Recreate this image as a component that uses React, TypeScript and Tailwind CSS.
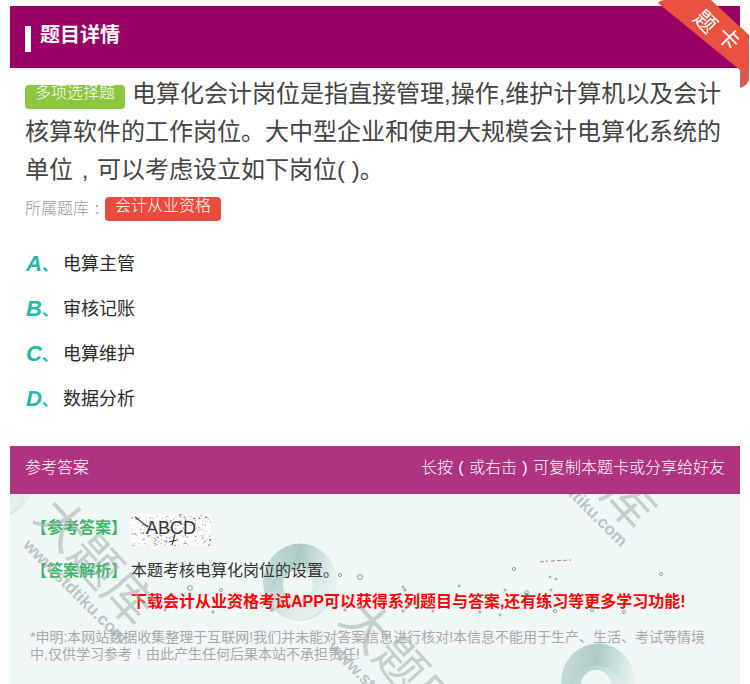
import React from "react";

const FONT = "font-['Liberation_Sans','Noto_Sans_CJK_SC',sans-serif]";

function Ribbon() {
  return (
    <div className="absolute right-0 top-0 h-[95px] w-[100px] overflow-hidden pointer-events-none">
      <svg viewBox="0 0 100 95" className="absolute inset-0 h-full w-full">
        <defs>
          <linearGradient id="fold" x1="0" y1="0" x2="0" y2="1">
            <stop offset="0" stopColor="#e4523f" />
            <stop offset="0.7" stopColor="#de5a4a" />
            <stop offset="1" stopColor="#c9675f" />
          </linearGradient>
        </defs>
        <path d="M16 7 L90 68 L90 60 L30 8 Z" fill="#820a58" opacity="0.55" />
        <path d="M90 68 L90 88 Q97 86 99 80 L99 50 Z" fill="url(#fold)" />
        <path d="M8 3 Q10 0 15 0 L61 0 L99 35 L99 58 L90 70 Z" fill="#e8523f" />
      </svg>
      <span className="absolute left-[44px] top-[11px] rotate-45 text-[22px] leading-none text-white">题</span>
      <span className="absolute left-[67px] top-[28px] rotate-45 text-[22px] leading-none text-white">卡</span>
    </div>
  );
}

function Ring({ className, id }: { className: string; id: string }) {
  return (
    <svg viewBox="0 0 76 78" className={className}>
      <defs>
        <linearGradient id={`${id}a`} x1="0" y1="0" x2="1" y2="0.2">
          <stop offset="0" stopColor="#c8dfdb" />
          <stop offset="0.5" stopColor="#aecbc6" />
          <stop offset="0.72" stopColor="#c6dcd8" />
          <stop offset="1" stopColor="#e4f1ef" />
        </linearGradient>
        <linearGradient id={`${id}b`} x1="0" y1="0" x2="1" y2="1">
          <stop offset="0" stopColor="#acc9c5" />
          <stop offset="0.6" stopColor="#dcebe8" />
          <stop offset="1" stopColor="#eef7f5" />
        </linearGradient>
      </defs>
      <ellipse cx="38" cy="39" rx="37" ry="38.5" fill={`url(#${id}a)`} />
      <ellipse cx="36" cy="50" rx="28" ry="27" fill={`url(#${id}b)`} />
      <circle cx="36" cy="42" r="15" fill="#eff8f7" />
    </svg>
  );
}

function Watermark({ className }: { className: string }) {
  return (
    <div className={`absolute h-0 w-0 ${className}`}>
      <span className="absolute left-[-93px] top-[-35px] w-[180px] rotate-[48deg] text-center text-[50px] leading-[64px] font-normal text-[#a3afad]/55 whitespace-nowrap">
        大题库
      </span>
      <span className="absolute left-[-113px] top-[15px] w-[180px] rotate-[45deg] text-center text-[17px] leading-[24px] font-bold text-[#a3afad]/70 whitespace-nowrap">
        www.stdtiku.com
      </span>
    </div>
  );
}

const specks: [number, number, number][] = [
  [340, 575, 1.6], [360, 577, 2.6], [403, 587, 1], [408, 606, 1.2], [556, 579, 1], [514, 569, 1.6],
  [550, 577, 0.8], [527, 593, 2.2], [505, 590, 1], [551, 590, 1], [661, 574, 1.6], [555, 611, 1.6],
  [459, 586, 1], [405, 590, 1.2], [221, 590, 1.6], [190, 588, 2.4], [165, 610, 1], [213, 612, 1],
  [272, 610, 1.4], [304, 600, 1.2], [345, 610, 1], [403, 611, 1.2], [433, 611, 1], [480, 612, 1.2],
  [592, 610, 1.6], [624, 612, 1.6], [500, 615, 1],
];

function Specks() {
  return (
    <svg viewBox="0 0 730 190" className="absolute inset-0 h-[190px] w-[730px] pointer-events-none">
      {specks.map(([x, y, r], i) => (
        <circle key={i} cx={x - 10} cy={y - 494} r={r} fill="none" stroke="#8a9492" strokeWidth="0.9" />
      ))}
      <path d="M530 73 l8 -1 M541 72 l20 -1" transform="translate(0 -5)" stroke="#777" strokeWidth="0.8" strokeDasharray="4 2" fill="none" />
    </svg>
  );
}

function Noise() {
  const dots: React.ReactElement[] = [];
  let s = 12345;
  const rnd = () => {
    s = (s * 1103515245 + 12345) & 0x7fffffff;
    return s / 0x7fffffff;
  };
  for (let i = 0; i < 240; i++) {
    dots.push(
      <rect key={i} x={rnd() * 80} y={rnd() * 32} width={rnd() * 1.6 + 0.4} height={rnd() * 1.2 + 0.4} fill="#55605e" opacity={rnd() * 0.7 + 0.2} />
    );
  }
  return (
    <svg viewBox="0 0 80 32" className="absolute inset-0 h-full w-full">
      <rect width="80" height="32" fill="#fdfdfd" />
      {dots}
      <path d="M4 3 L17 13 M44 20 L41 31 M38 28 L46 26" stroke="#333" strokeWidth="1.1" fill="none" />
    </svg>
  );
}

function Option({ letter, text }: { letter: string; text: string }) {
  return (
    <div className="flex h-[45px] items-center">
      <span className="flex w-[37px] items-baseline pb-[2px] text-[22px] font-bold italic text-[#20b9ab]">
        {letter}
        <span className="text-[16px] not-italic font-bold">、</span>
      </span>
      <span className="text-[18px] text-[#2b2b2b]">{text}</span>
    </div>
  );
}

function Mid({ c, w }: { c: string; w: string }) {
  return <span className={`inline-block text-center ${w}`}>{c}</span>;
}

export default function App() {
  return (
    <div className={`relative h-[684px] w-[750px] overflow-hidden bg-white pl-[10px] pr-[10px] pt-[6px] ${FONT}`}>
      <Ribbon />
      <div className="flex h-[62px] items-center bg-[#990066] pl-[15px]">
        <div className="h-[26px] w-[6px] translate-y-[2px] bg-white" />
        <h1 className="ml-[9px] pb-[4px] text-[20px] font-bold text-white">题目详情</h1>
      </div>

      <div className="px-[15px] pt-[7px]">
        <p className="text-[24px] leading-[38px] text-[#444444]">
          <span className="relative top-[1px] mr-[7px] inline-block h-[24px] w-[100px] rounded-[4px] bg-[#8cc63f] text-center align-middle text-[16px] leading-[16px] text-white font-light">
            多项选择题
          </span>
          电算化会计岗位是指直接管理,操作,维护计算机以及会计核算软件的工作岗位。大中型企业和使用大规模会计电算化系统的单位
          <Mid c="," w="w-[24px]" />
          可以考虑设立如下岗位( )。
        </p>
        <div className="mt-[8px] flex h-[24px] items-start text-[16px] text-[#999999]">
          <span className="font-light">所属题库<Mid c=":" w="w-[16px]" /></span>
          <span className="h-[24px] w-[116px] rounded-[4px] bg-[#e74c3c] text-center leading-[17px] text-white font-light">会计从业资格</span>
        </div>
      </div>

      <div className="mt-[21px] px-[16px]">
        <Option letter="A" text="电算主管" />
        <Option letter="B" text="审核记账" />
        <Option letter="C" text="电算维护" />
        <Option letter="D" text="数据分析" />
      </div>

      <div className="mt-[24px] flex h-[48px] items-center justify-between bg-[#b03382] px-[15px] pb-[4px] text-[16px] text-white font-light">
        <span>参考答案</span>
        <span>长按<Mid c="(" w="w-[16px]" />或右击<Mid c=")" w="w-[16px]" />可复制本题卡或分享给好友</span>
      </div>

      <div className="relative h-[190px] overflow-hidden bg-[#eff8f7]">
        <Ring id="r1" className="absolute left-[-51px] top-[-54px] h-[78px] w-[76px]" />
        <Ring id="r2" className="absolute left-[252px] top-[49px] h-[78px] w-[76px]" />
        <Ring id="r3" className="absolute left-[550px] top-[149px] h-[78px] w-[76px]" />

        <div className="relative pl-[18px] pt-[20px]">
          <div className="flex h-[32px] items-start">
            <span className="w-[103px] pl-[3px] text-[16px] font-bold leading-[28px] text-[#38b565]">【参考答案】</span>
            <span className="relative h-[32px] w-[80px]">
              <Noise />
              <span className="absolute left-[15px] top-[4px] text-[18px] leading-[20px] text-[#333333]">ABCD</span>
            </span>
          </div>
          <div className="mt-[13px] flex h-[24px] items-center">
            <span className="w-[103px] pl-[3px] text-[16px] font-bold text-[#38b565]">【答案解析】</span>
            <span className="text-[16px] text-[#333333]">本题考核电算化岗位的设置。</span>
          </div>
          <div className="mt-[7px] h-[24px] pl-[103px] text-[16px] font-bold leading-[24px] text-[#ff0000] whitespace-nowrap">
            下载会计从业资格考试APP可以获得系列题目与答案,还有练习等更多学习功能!
          </div>
          <p className="mt-[15px] w-[680px] pl-[2px] text-[14px] leading-[17px] text-[#a8a8a8]">
            *申明:本网站数据收集整理于互联网!我们并未能对答案信息进行核对!本信息不能用于生产、生活、考试等情境中,仅供学习参考
            <Mid c="!" w="w-[14px]" />
            由此产生任何后果本站不承担责任!
          </p>
        </div>

        <Specks />
        <Watermark className="left-[88px] top-[71px]" />
        <Watermark className="left-[393px] top-[173px]" />
        <Watermark className="left-[588px] top-[-26px]" />
      </div>
    </div>
  );
}
